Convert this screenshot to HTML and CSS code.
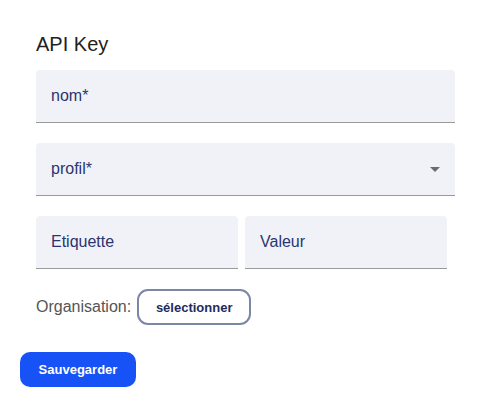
FILE: index.html
```html
<!DOCTYPE html>
<html lang="fr">
<head>
<meta charset="utf-8">
<title>API Key</title>
<link rel="stylesheet" href="styles.css">
</head>
<body>
<div class="page">
  <div class="form">
    <h1 class="title">API Key</h1>
    <div class="field wide"><span class="label">nom*</span></div>
    <div class="field wide select"><span class="label">profil*</span>
      <svg class="arrow" width="10" height="5" viewBox="0 0 10 5"><path d="M0 0L5 5L10 0Z" fill="#6b6b6b"/></svg>
    </div>
    <div class="pair">
      <div class="field half"><span class="label">Etiquette</span></div>
      <div class="field half"><span class="label">Valeur</span></div>
    </div>
    <div class="org">
      <span class="org-label">Organisation:</span>
      <button class="pick">sélectionner</button>
    </div>
  </div>
  <button class="save">Sauvegarder</button>
</div>
</body>
</html>
```
FILE: styles.css
```css
html, body { margin: 0; padding: 0; background: #fff; }
body { font-family: "Liberation Sans", Arial, sans-serif; }
.page { padding: 29px 20px 0 20px; display: flex; flex-direction: column; align-items: flex-start; }
.form { padding-left: 16px; display: flex; flex-direction: column; gap: 20px; }
.title { margin: 4px 0 -6px 0; font-size: 20px; font-weight: 400; color: #222; line-height: 23px; }
.field {
  box-sizing: border-box;
  height: 53px;
  background: #f1f2f8;
  border-radius: 4px 4px 0 0;
  border-bottom: 1px solid #9a9a9a;
  display: flex;
  align-items: center;
  padding: 0 15px;
}
.wide { width: 419px; }
.half { width: 202px; }
.label { font-size: 16px; color: #2a3570; }
.select { justify-content: space-between; padding-right: 15px; }
.arrow { display: block; }
.pair { display: flex; gap: 7px; }
.org { display: flex; align-items: center; gap: 6px; }
.org-label { font-size: 16px; color: #555; }
.pick {
  height: 36px;
  width: 114px;
  border: 2px solid #7c87a6;
  border-radius: 11px;
  background: #fff;
  font-family: "Liberation Sans", Arial, sans-serif;
  font-weight: 700;
  font-size: 13px;
  color: #1f2b5e;
  padding: 0;
}
.save {
  margin-top: 27px;
  height: 35px;
  width: 116px;
  border: none;
  border-radius: 10px;
  background: #1652f5;
  color: #fff;
  font-family: "Liberation Sans", Arial, sans-serif;
  font-weight: 700;
  font-size: 13px;
  padding: 0;
}
```
